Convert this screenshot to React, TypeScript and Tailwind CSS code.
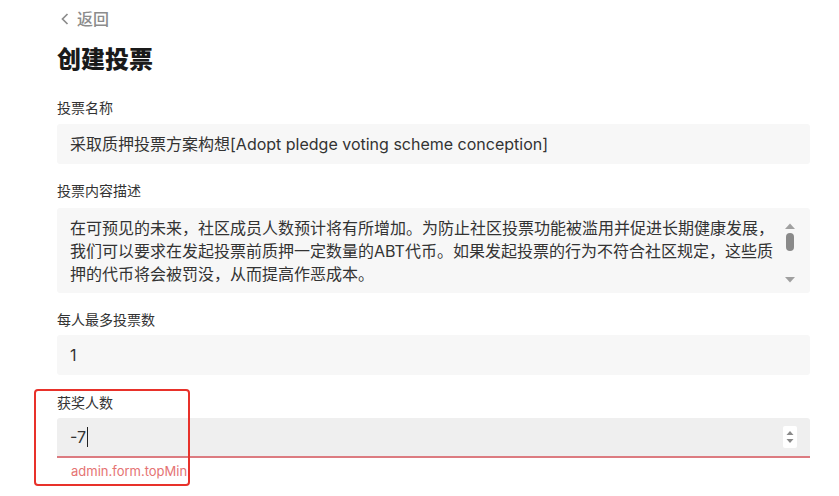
import React from 'react';

const font = { fontFamily: 'Inter, "Noto Sans CJK SC", sans-serif' };

function Label({ children }: { children: React.ReactNode }) {
	return <div className="text-[14px] leading-[20px] text-[#333]">{children}</div>;
}

function Scrollbar() {
	return (
		<div className="flex flex-col items-center w-[14px] h-[62px] mt-[14px] mr-[13px]">
			<svg width="12" height="8" viewBox="0 0 12 8">
				<path d="M1 7 L6 1.5 L11 7 Z" fill="#a0a0a0" />
			</svg>
			<div className="w-[8px] h-[18px] mt-[3px] rounded-full bg-[#8a8a8a]" />
			<div className="flex-1" />
			<svg width="12" height="8" viewBox="0 0 12 8">
				<path d="M1 1 L11 1 L6 6.5 Z" fill="#a0a0a0" />
			</svg>
		</div>
	);
}

export default function App() {
	return (
		<div className="relative w-[839px] h-[496px] bg-white overflow-hidden text-[#333]" style={font}>
			<div className="pl-[57px] pr-[29px]">
				<div className="flex items-center h-[20px] mt-[9px] text-[16px] text-[#8c8c8c]">
					<svg width="10" height="14" viewBox="0 0 10 14" className="ml-[3px]">
						<path d="M7.5 2 L2.5 7 L7.5 12" fill="none" stroke="#8c8c8c" strokeWidth="1.7" />
					</svg>
					<span className="ml-[7px] font-medium">返回</span>
				</div>
				<div className="mt-[15px] text-[24px] leading-[32px] font-extrabold text-[#1a1a1a]">创建投票</div>

				<div className="mt-[22px]">
					<Label>投票名称</Label>
					<div className="mt-[6px] h-[40px] flex items-center bg-[#f7f7f7] rounded-[3px] pl-[13px] text-[16px] text-[#333]">
						采取质押投票方案构想[Adopt pledge voting scheme conception]
					</div>
				</div>

				<div className="mt-[17px]">
					<Label>投票内容描述</Label>
					<div className="mt-[7px] h-[85px] flex bg-[#f7f7f7] rounded-[3px] text-[16px] leading-[23px]">
						<div className="flex-1 pl-[13px] pt-[9px] whitespace-nowrap">
							<div>在可预见的未来，社区成员人数预计将有所增加。为防止社区投票功能被滥用并促进长期健康发展，</div>
							<div>我们可以要求在发起投票前质押一定数量的ABT代币。如果发起投票的行为不符合社区规定，这些质</div>
							<div>押的代币将会被罚没，从而提高作恶成本。</div>
						</div>
						<Scrollbar />
					</div>
				</div>

				<div className="mt-[17px]">
					<Label>每人最多投票数</Label>
					<div className="mt-[5px] h-[40px] flex items-center bg-[#f7f7f7] rounded-[3px] pl-[13px] text-[16px]">
						1
					</div>
				</div>

				<div className="mt-[18px]">
					<Label>获奖人数</Label>
					<div className="mt-[5px] h-[40px] flex items-center justify-between bg-[#efefef] rounded-t-[3px] border-b-2 border-[#dc7b80] pl-[13px] pr-[13px] text-[16px]">
						<div className="flex items-center">
							<span>-7</span>
							<span className="ml-[1px] w-[1px] h-[20px] bg-[#222]" />
						</div>
						<div className="flex flex-col items-center justify-center w-[14px] h-[22px] bg-white rounded-[2px]">
							<svg width="8" height="6" viewBox="0 0 8 6">
								<path d="M0.5 5 L4 1 L7.5 5 Z" fill="#8a8a8a" />
							</svg>
							<svg width="8" height="6" viewBox="0 0 8 6" className="mt-[2px]">
								<path d="M0.5 1 L7.5 1 L4 5 Z" fill="#8a8a8a" />
							</svg>
						</div>
					</div>
					<div className="mt-[4px] pl-[14px] text-[13px] leading-[18px] text-[#e57373]">admin.form.topMin</div>
				</div>
			</div>

			<div className="absolute left-[34px] top-[389px] w-[156px] h-[97px] border-2 border-[#e8312a] rounded-[4px]" />
		</div>
	);
}
